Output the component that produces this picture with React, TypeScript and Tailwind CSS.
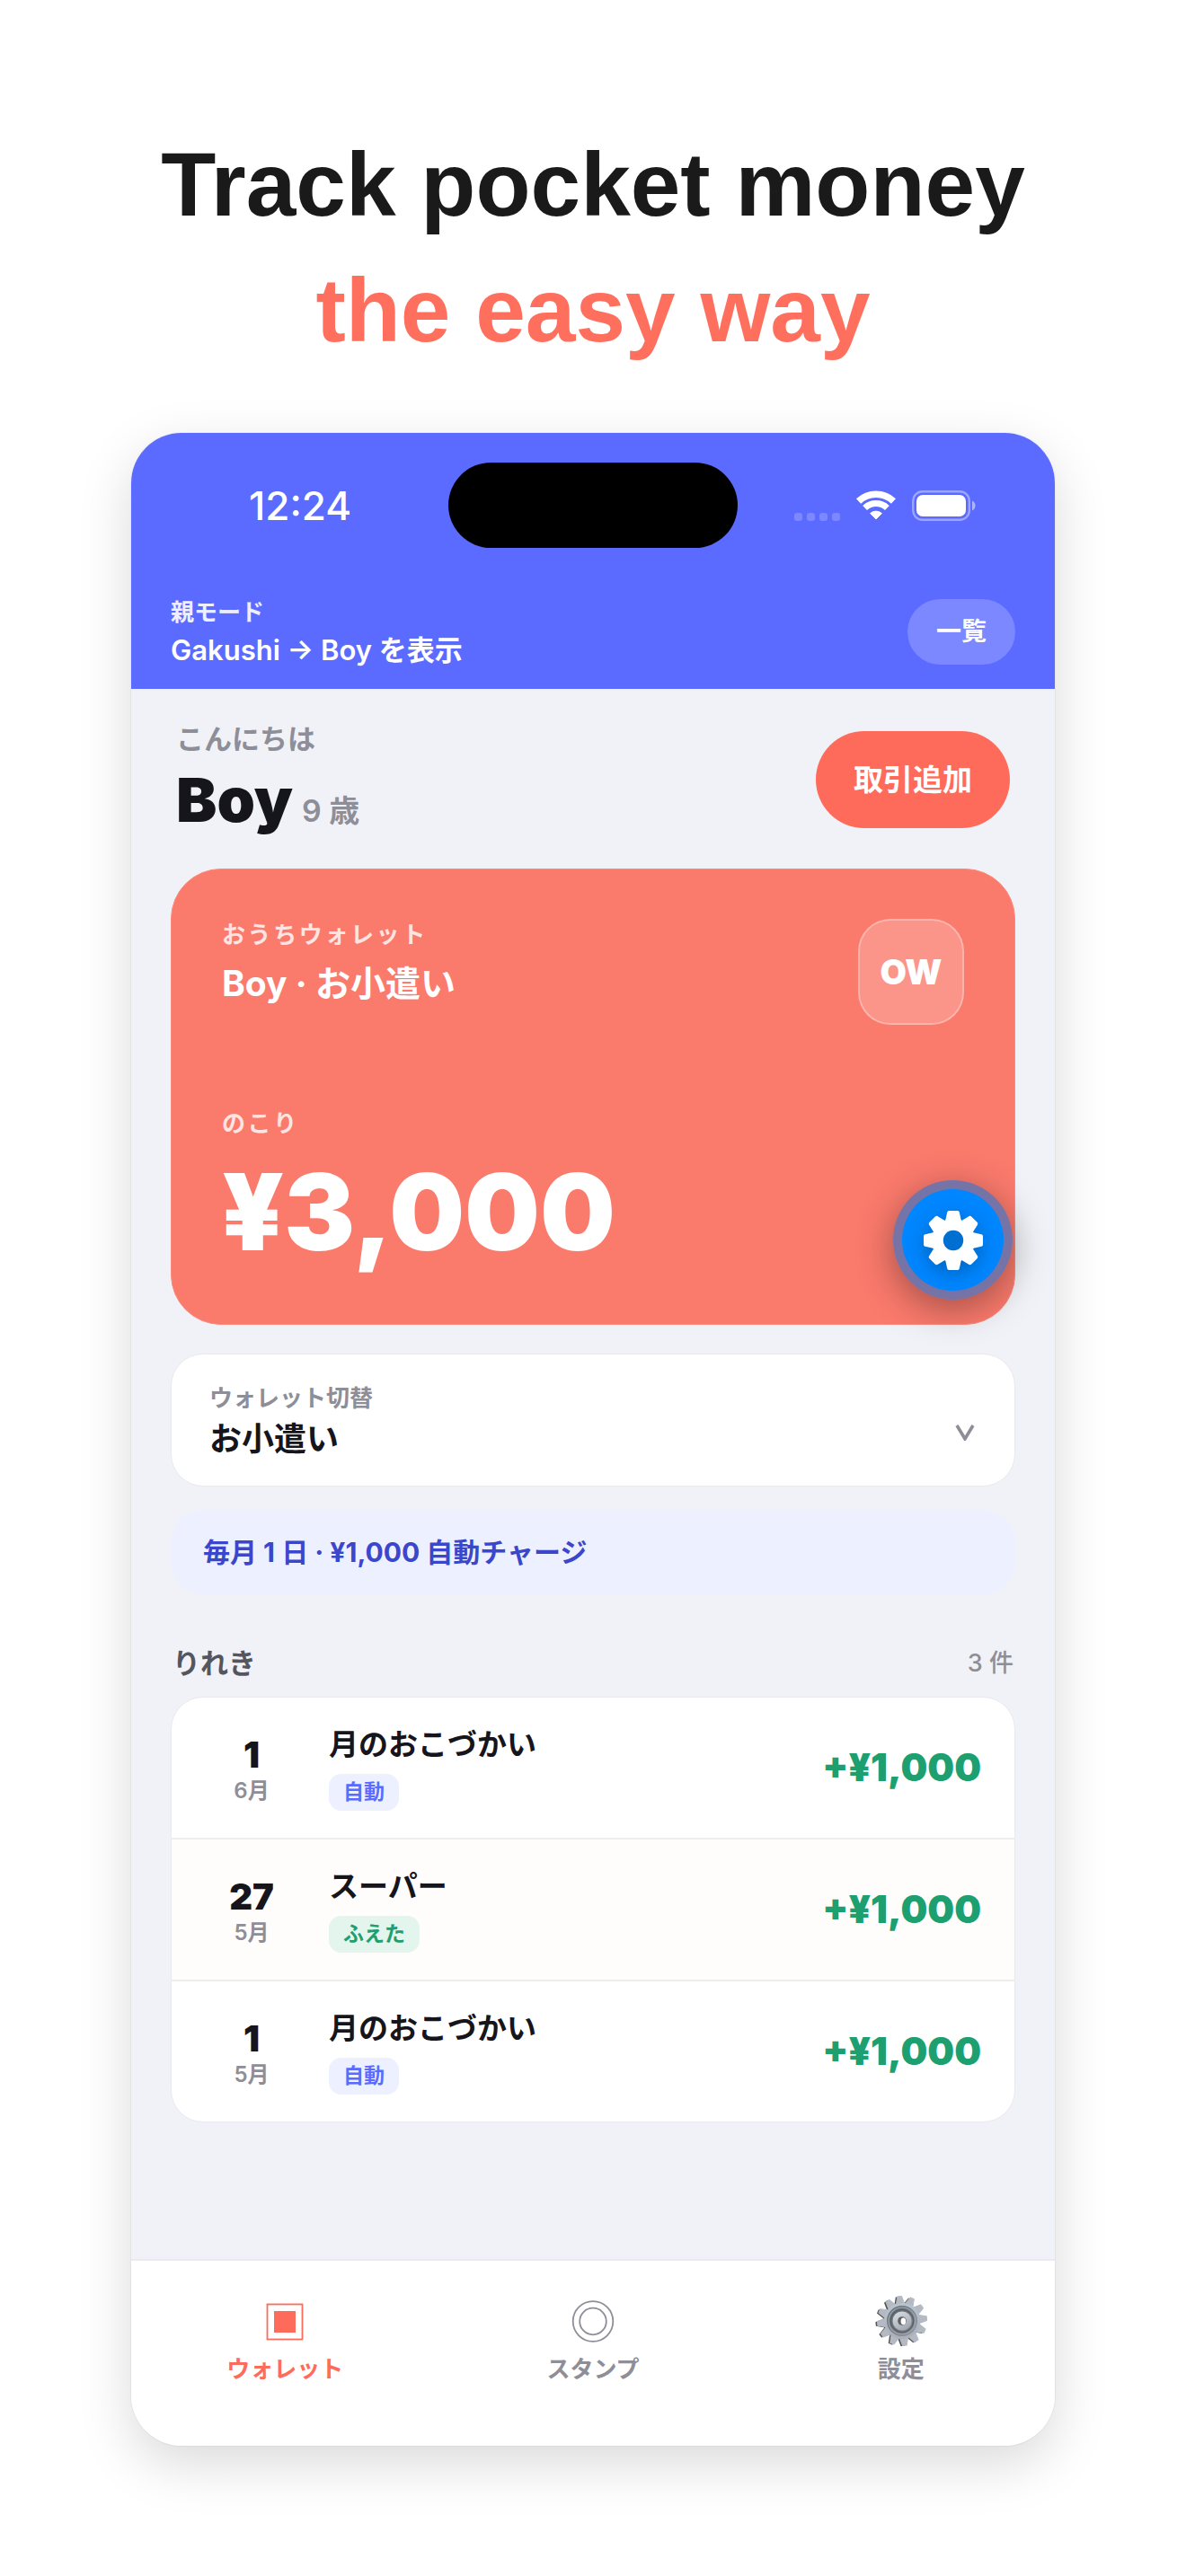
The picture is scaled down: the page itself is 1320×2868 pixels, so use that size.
import React from "react";

type Entry = {
  day: string;
  month: string;
  title: string;
  tag: string;
  kind: "auto" | "plus";
  amount: string;
};

const entries: Entry[] = [
  { day: "1", month: "6月", title: "月のおこづかい", tag: "自動", kind: "auto", amount: "+¥1,000" },
  { day: "27", month: "5月", title: "スーパー", tag: "ふえた", kind: "plus", amount: "+¥1,000" },
  { day: "1", month: "5月", title: "月のおこづかい", tag: "自動", kind: "auto", amount: "+¥1,000" },
];

function SignalDots() {
  return (
    <div className="flex gap-[5px] self-end">
      {[0, 1, 2, 3].map((i) => (
        <span key={i} className="h-[9px] w-[9px] rounded-[3px] bg-white/20" />
      ))}
    </div>
  );
}

function WifiIcon() {
  return (
    <svg width="44" height="33" viewBox="0 0 44 33" fill="none" stroke="white" aria-label="Wi-Fi" role="img">
      <path d="M2.500 12A28.300 28.300 0 0 1 41.500 12" strokeWidth="7.600" />
      <path d="M9.600 19.450A18 18 0 0 1 34.400 19.450" strokeWidth="7" />
      <path d="M22 32 15.600 25.600A9.500 9.500 0 0 1 28.400 25.600Z" fill="white" strokeWidth="1" strokeLinejoin="round" />
    </svg>
  );
}

function BatteryIcon() {
  return (
    <svg width="71" height="34" viewBox="0 0 71 34" aria-label="バッテリー" role="img">
      <rect x="1.200" y="1.200" width="62.600" height="31.600" rx="10.500" fill="none" stroke="white" strokeOpacity="0.4" strokeWidth="2.400" />
      <rect x="5" y="5" width="55" height="24" rx="7" fill="white" />
      <path d="M67 11.500c2.300 1 3.500 3.100 3.500 5.500s-1.200 4.500-3.500 5.500Z" fill="white" fillOpacity="0.5" />
    </svg>
  );
}

const tooth = "M-4.500-33h9c1.200 0 2 .6 2.300 1.800l1.700 7.700c.3 1.300.9 2 2 2.500H-10.500c1.100-.5 1.700-1.200 2-2.500l1.700-7.700c.3-1.200 1.100-1.800 2.300-1.800Z";

function GearIcon() {
  return (
    <svg width="68" height="68" viewBox="-34 -34 68 68" aria-hidden="true" className="overflow-visible drop-shadow-[0_6px_10px_rgba(0,0,0,0.25)]">
      <g fill="white">
        {[0, 45, 90, 135, 180, 225, 270, 315].map((a) => (
          <path key={a} d={tooth} transform={`rotate(${a})`} />
        ))}
        <circle r="23" />
      </g>
      <circle r="11.200" fill="#006fd2" />
    </svg>
  );
}

function WalletTabIcon() {
  return (
    <svg width="60" height="60" viewBox="0 0 60 60" aria-hidden="true">
      <rect x="10.500" y="10.500" width="39" height="39" fill="none" stroke="currentColor" strokeWidth="1.800" />
      <rect x="18" y="18" width="24" height="24" fill="currentColor" />
    </svg>
  );
}

function StampTabIcon() {
  return (
    <svg width="60" height="60" viewBox="0 0 60 60" aria-hidden="true" fill="none" stroke="currentColor" strokeWidth="1.800">
      <circle cx="30" cy="29.500" r="22.300" />
      <circle cx="30" cy="29.500" r="14.800" />
    </svg>
  );
}

const cog = "M-2.300-27.500h4.600l2.300 8.500h-9.200Z";
const cogAngles = [-6, 24, 54, 84, 114, 144, 174, 204, 234, 264, 294, 324];

function SettingsTabIcon() {
  return (
    <svg width="60" height="60" viewBox="-31 -29 60 60" aria-hidden="true">
      <defs>
        <linearGradient id="cogFace" gradientUnits="userSpaceOnUse" x1="0" y1="-28" x2="0" y2="28">
          <stop offset="0" stopColor="#b9c9d4" />
          <stop offset="1" stopColor="#abaab6" />
        </linearGradient>
        <linearGradient id="cogDisc" x1="0" y1="0" x2="1" y2="1">
          <stop offset="0" stopColor="#636b72" />
          <stop offset="1" stopColor="#8f959c" />
        </linearGradient>
        <linearGradient id="cogHub" x1="0" y1="0" x2="0.600" y2="1">
          <stop offset="0" stopColor="#dbe3ea" />
          <stop offset="1" stopColor="#a4a8b1" />
        </linearGradient>
      </defs>
      <g fill="#55524f" transform="translate(-2 0.600)">
        {cogAngles.map((a) => (
          <path key={a} d={cog} transform={`rotate(${a})`} />
        ))}
        <circle r="19.500" />
      </g>
      <g fill="#b3bac4" stroke="#b3bac4" strokeWidth="1" strokeLinejoin="round">
        {cogAngles.map((a) => (
          <path key={a} d={cog} transform={`rotate(${a})`} />
        ))}
      </g>
      <circle r="20" fill="url(#cogFace)" />
      <circle r="17" fill="url(#cogDisc)" />
      <circle r="15" fill="none" stroke="#a0a7ae" strokeWidth="1.200" />
      <circle r="12.500" fill="none" stroke="#585f66" strokeWidth="1.500" />
      <circle r="10.500" fill="url(#cogHub)" />
      <circle r="4.800" fill="#5f5e62" />
      <ellipse cx="1.400" cy="0.400" rx="2.800" ry="3.800" fill="#ffffff" />
    </svg>
  );
}

const tabs = [
  { label: "ウォレット", icon: <WalletTabIcon />, active: true },
  { label: "スタンプ", icon: <StampTabIcon />, active: false },
  { label: "設定", icon: <SettingsTabIcon />, active: false },
];

export default function App() {
  return (
    <div className="min-h-screen bg-white px-[146px] pt-[135px] pb-32 font-[Inter,'Noto_Sans_CJK_JP',sans-serif]" lang="ja">
      <h1 className="text-center font-['Liberation_Sans',sans-serif] text-[100px] leading-[140px] font-bold whitespace-nowrap text-[#1a1a1a]">
        Track pocket money
        <span className="block text-[#ff6f5e]">the easy way</span>
      </h1>

      <div className="relative mt-[67px] flex flex-col overflow-hidden rounded-[56px] bg-[#f1f2f7] shadow-[0_0_0_1px_rgba(0,0,0,0.04),0_20px_60px_rgba(0,0,0,0.15)]">
        <header className="bg-[#5b6bff] pt-[33px] pb-[22px] text-white">
          <div className="grid grid-cols-[1fr_auto_1fr] items-center">
            <div className="pl-[131px] text-[44px] leading-[48px] font-medium">12:24</div>
            <div className="h-[95px] w-[322px] rounded-full bg-black" />
            <div className="flex items-center justify-end gap-[18px] pr-[88px]">
              <SignalDots />
              <WifiIcon />
              <BatteryIcon />
            </div>
          </div>
          <div className="mt-[51px] flex items-center justify-between px-11">
            <div className="leading-[42px]">
              <p className="text-[26px] font-bold text-white/90">親モード</p>
              <p className="text-[31px] font-semibold">Gakushi → Boy を表示</p>
            </div>
            <button type="button" className="rounded-full bg-white/20 px-8 py-4 text-[28px] leading-[41px] font-bold">
              一覧
            </button>
          </div>
        </header>

        <main className="px-11 pt-[34px] pb-[152px]">
          <section className="flex items-center justify-between px-1.5">
            <div>
              <p className="text-[31px] leading-[44px] font-semibold text-[#8e8e99]">こんにちは</p>
              <h2 className="flex items-baseline gap-2.5 text-[68px] leading-[90px] font-black text-[#15151b]">
                Boy
                <span className="text-[34px] leading-none font-semibold text-[#8e8e99]">9 歳</span>
              </h2>
            </div>
            <button type="button" className="rounded-full bg-[#ff6b5b] px-[42px] py-8 text-[33px] leading-[44px] font-bold text-white">
              取引追加
            </button>
          </section>

          <section className="mt-8 rounded-[56px] border border-[#fb8b7f] bg-[#fa7a6c] px-14 pt-[55px] pb-[65px] text-white">
            <div className="flex items-start justify-between">
              <div>
                <p className="text-[26px] leading-[36px] font-bold tracking-widest text-white/80">おうちウォレット</p>
                <p className="mt-2.5 text-[39px] leading-[52px] font-bold">Boy · お小遣い</p>
              </div>
              <div className="flex h-[118px] w-[118px] items-center justify-center rounded-[36px] border-2 border-white/30 bg-white/20 text-[38px] font-black">
                OW
              </div>
            </div>
            <p className="mt-[92px] text-[26px] leading-[36px] font-bold tracking-widest text-white/80">のこり</p>
            <p className="mt-5 text-[118px] leading-[120px] font-black">¥3,000</p>
          </section>

          <label className="mt-8 flex items-center justify-between rounded-[36px] border border-[#e9e9ee] bg-white py-7 pr-[44px] pl-[42px]">
            <span className="flex-1">
              <span className="block text-[26px] leading-[42px] font-bold text-[#8e8e99]">ウォレット切替</span>
              <select className="block h-12 w-full appearance-none bg-transparent text-[36px] leading-[48px] font-bold text-[#15151b] outline-none">
                <option>お小遣い</option>
              </select>
            </span>
            <svg width="22" height="18" viewBox="0 0 22 18" fill="none" stroke="#8e8e99" strokeWidth="3.600" aria-hidden="true" className="mt-7">
              <path d="M2 1 11 16 20 1" />
            </svg>
          </label>

          <p className="mt-[26px] rounded-[36px] bg-[#ecf0ff] px-9 py-[27px] text-[30px] leading-[40px] font-bold text-[#3a46cc]">
            毎月 1 日 · ¥1,000 自動チャージ
          </p>

          <div className="mt-[57px] flex items-center justify-between px-0.5 leading-[40px]">
            <h3 className="text-[31px] font-bold text-[#55555f]">りれき</h3>
            <span className="text-[27px] font-medium text-[#8e8e99]">3 件</span>
          </div>

          <ul className="mt-[17px] overflow-hidden rounded-[36px] border border-[#e9e9ee] bg-white">
            {entries.map((e, i) => (
              <li
                key={i}
                className="flex items-center border-b-2 border-[#eeeeee] px-[37px] py-[30px] last:border-b-0 even:bg-[#fefdfb]"
              >
                <div className="w-[104px] text-center">
                  <p className="text-[40px] leading-[52px] font-black text-[#15151b]">{e.day}</p>
                  <p className="text-[24px] leading-[28px] font-semibold text-[#8e8e99]">{e.month}</p>
                </div>
                <div className="ml-[34px] flex flex-1 flex-col items-start">
                  <p className="text-[33px] leading-[44px] font-bold text-[#15151b]">{e.title}</p>
                  <span
                    className={
                      e.kind === "auto"
                        ? "mt-[11px] rounded-[14px] bg-[#ecf0ff] px-4 text-[23px] leading-[41px] font-bold text-[#5b6bff]"
                        : "mt-[11px] rounded-[14px] bg-[#e3f5ed] px-4 text-[23px] leading-[41px] font-bold text-[#1e9f70]"
                    }
                  >
                    {e.tag}
                  </span>
                </div>
                <p className="text-[42px] leading-[52px] font-black text-[#1e9f70]">{e.amount}</p>
              </li>
            ))}
          </ul>
        </main>

        <nav className="grid grid-cols-3 border-t-2 border-[#ebebef] bg-white pt-[38px] pb-[67px]">
          {tabs.map((t) => (
            <button
              key={t.label}
              type="button"
              className={
                t.active
                  ? "flex flex-col items-center text-[26px] leading-[36px] font-bold text-[#ff6b5b]"
                  : "flex flex-col items-center text-[26px] leading-[36px] font-bold text-[#8e8e99]"
              }
            >
              {t.icon}
              <span className="mt-[5px]">{t.label}</span>
            </button>
          ))}
        </nav>

        <button
          type="button"
          aria-label="設定を開く"
          className="absolute top-[832px] right-[47px] flex h-[133px] w-[133px] items-center justify-center rounded-full bg-[#0a70d8]/55 shadow-[0_10px_40px_rgba(0,0,0,0.35)]"
        >
          <span className="flex h-[113px] w-[113px] items-center justify-center rounded-full bg-[#0086ff]">
            <GearIcon />
          </span>
        </button>
      </div>
    </div>
  );
}
